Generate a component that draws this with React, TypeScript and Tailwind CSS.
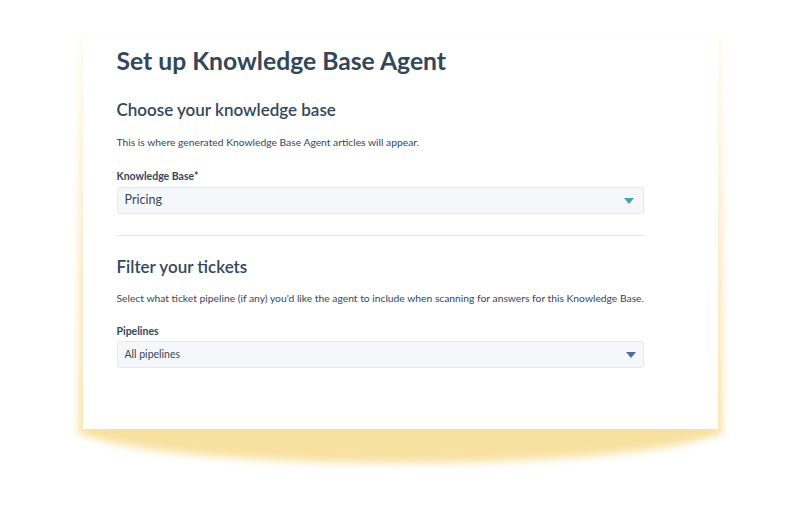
import React from "react";

function Caret({ color }: { color: string }) {
  return (
    <svg width="10" height="6" viewBox="0 0 10 6" className="shrink-0">
      <path d="M0 0 L10 0 L5 6 Z" fill={color} />
    </svg>
  );
}

export default function App() {
  return (
    <div
      className="w-[800px] h-[508px] bg-white overflow-hidden flex justify-center pt-[37px]"
      style={{ fontFamily: "Lato, 'Open Sans', sans-serif" }}
    >
      <div className="relative w-[635px] h-[392px]">
        {/* bottom elliptical yellow shadow */}
        <div className="absolute left-[2px] right-[2px] top-[356px] h-[70px] rounded-[50%] bg-[#f8e1a0] blur-[4px]" />
        {/* side glow */}
        <div className="absolute -left-[4px] -right-[4px] top-0 bottom-[-6px] bg-gradient-to-b from-[#fffbef] via-[#fbeac0] to-[#f8e1a0] blur-[4px]" />
        <div className="relative bg-white h-full pl-[34px] pr-[74px] pt-[9px] text-[#33475b]">
          <h1 className="text-[24.7px] leading-[30px] font-bold">Set up Knowledge Base Agent</h1>
          <h2 className="mt-[23px] text-[17px] leading-[22px] font-semibold">Choose your knowledge base</h2>
          <p className="mt-[14px] text-[10.3px] leading-[14px]">This is where generated Knowledge Base Agent articles will appear.</p>
          <div className="mt-[20px] text-[10.5px] leading-[14px] font-bold">Knowledge Base*</div>
          <div className="mt-[4px] h-[27px] rounded-[3px] border border-[#e3e8ee] bg-[#f5f8fa] flex items-center justify-between pl-[7px] pr-[9px]">
            <span className="text-[12.5px]">Pricing</span>
            <Caret color="#3ea5b9" />
          </div>
          <div className="mt-[21px] h-px bg-[#dfe3eb]" />
          <h2 className="mt-[20px] text-[17px] leading-[22px] font-semibold">Filter your tickets</h2>
          <p className="mt-[13px] text-[10.3px] leading-[14px] whitespace-nowrap">Select what ticket pipeline (if any) you'd like the agent to include when scanning for answers for this Knowledge Base.</p>
          <div className="mt-[19px] text-[10.5px] leading-[14px] font-bold">Pipelines</div>
          <div className="mt-[3px] h-[27px] rounded-[3px] border border-[#e3e8ee] bg-[#f5f8fa] flex items-center justify-between pl-[7px] pr-[7px]">
            <span className="text-[10.5px]">All pipelines</span>
            <Caret color="#516f90" />
          </div>
        </div>
      </div>
    </div>
  );
}
